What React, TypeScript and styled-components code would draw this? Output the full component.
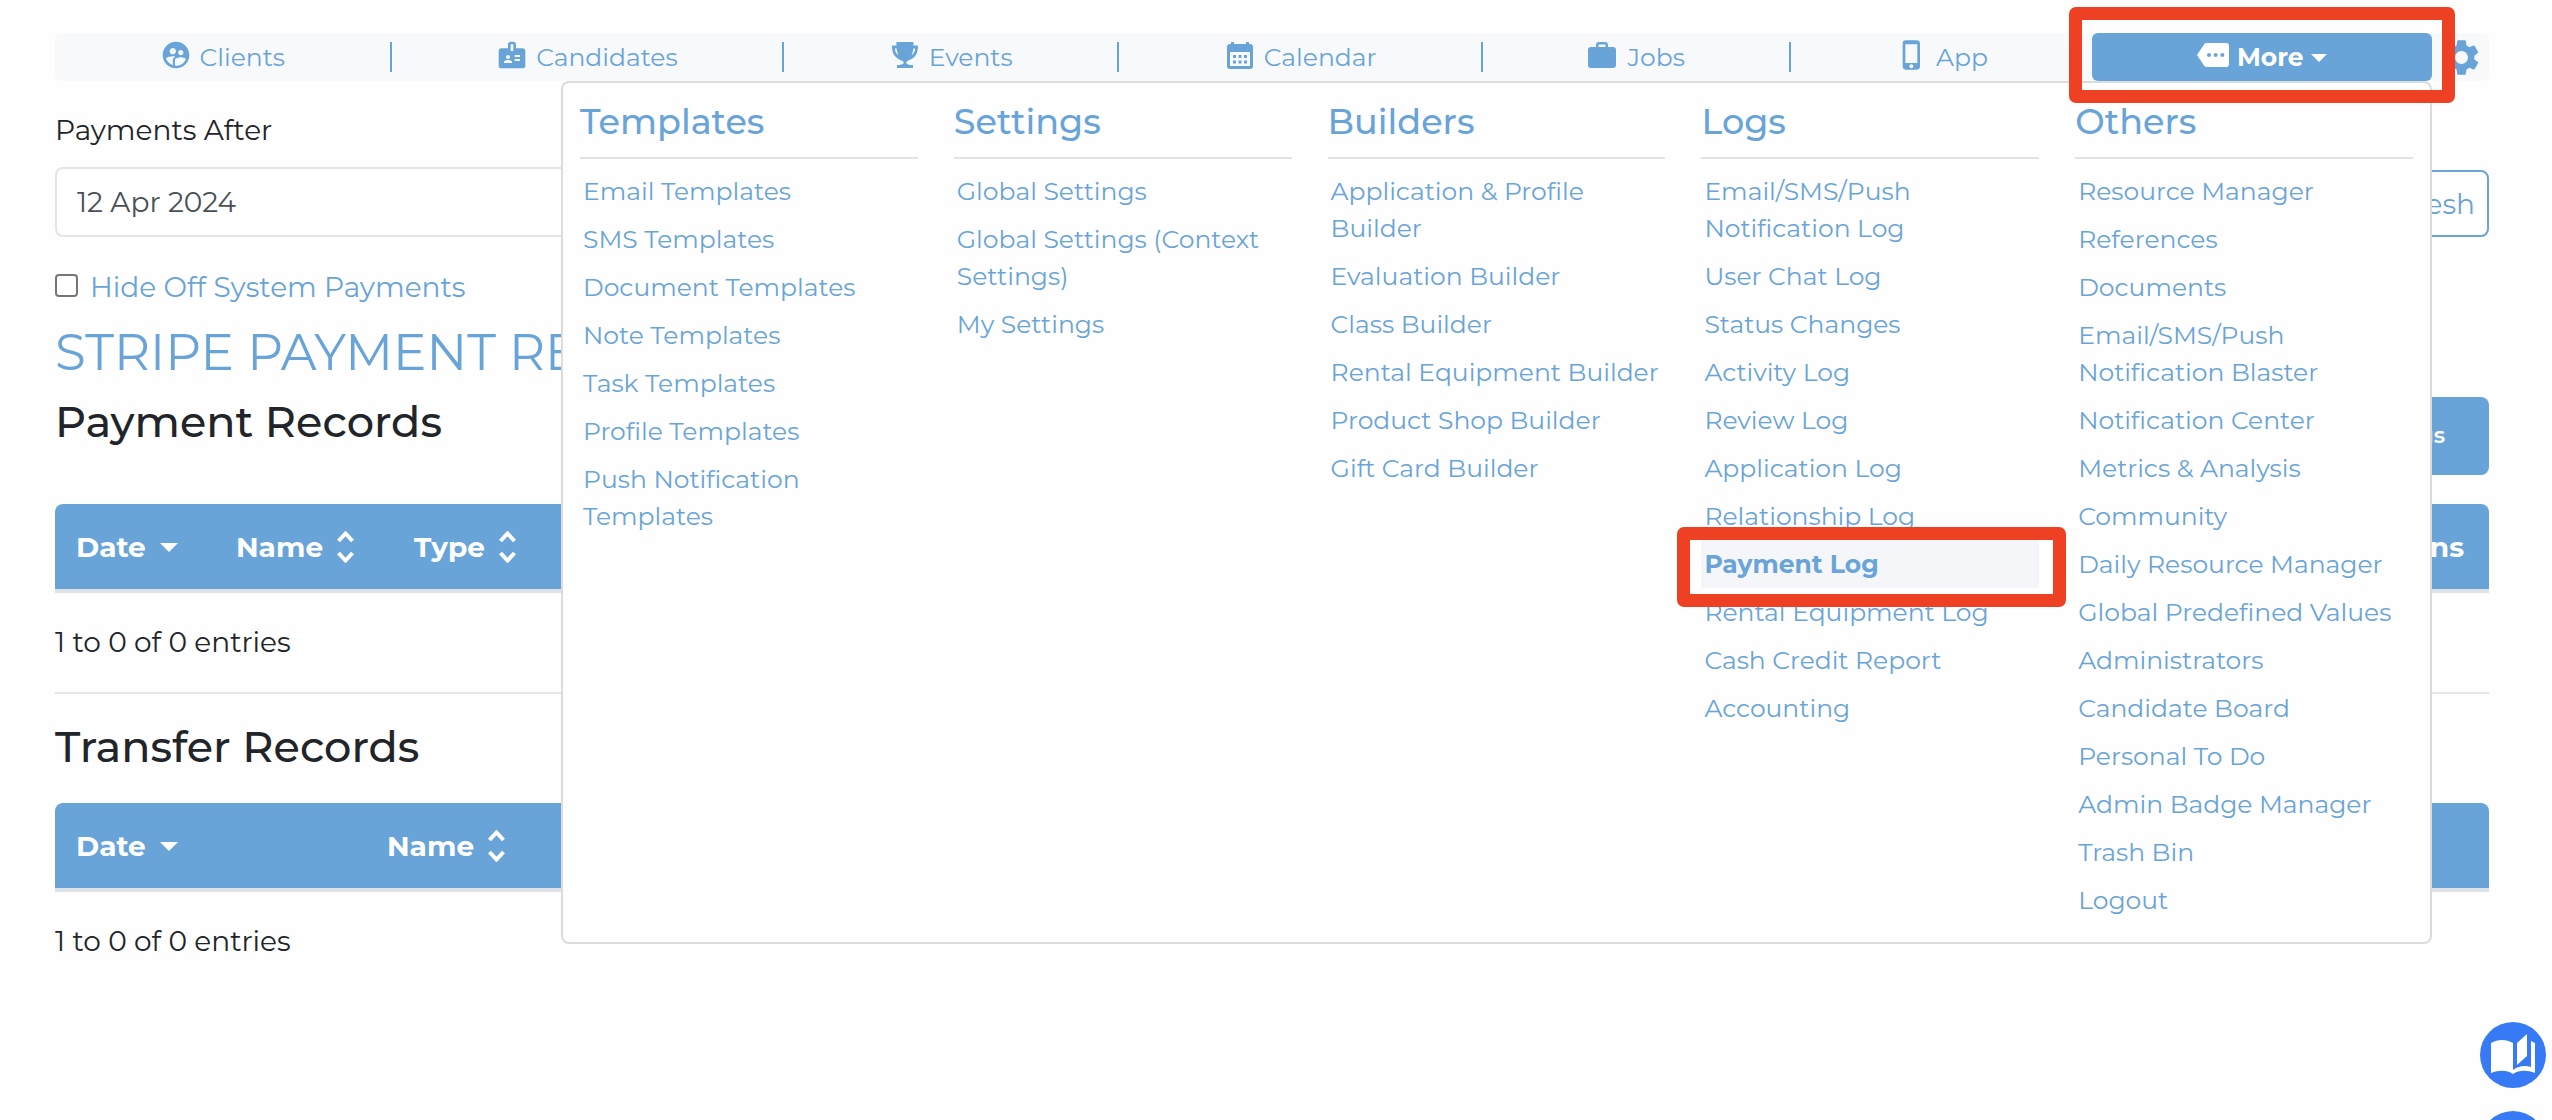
import React from "react";
import styled, { createGlobalStyle } from "styled-components";
import {
  MdSupervisedUserCircle,
  MdBadge,
  MdPhoneIphone,
  MdMore,
  MdSettings,
} from "react-icons/md";
import { IoMdTrophy } from "react-icons/io";

const blue = "#69a4d8";
const ink = "#212529";
const red = "#ee4023";

const GlobalStyle = createGlobalStyle`
  *, *::before, *::after { box-sizing: border-box; }
  body {
    margin: 0;
    background: #fefefe;
    color: ${ink};
    font-family: Montserrat, Inter, "Noto Sans", sans-serif;
    font-size: 28px;
    line-height: 42px;
  }
  button, input { font: inherit; }
  a { color: inherit; text-decoration: none; }
  h1, h2, h3, p, ul { margin: 0; padding: 0; }
`;

const Page = styled.div`
  padding: 33px 63px 40px 55px;
`;

const Nav = styled.nav`
  position: relative;
  display: flex;
  height: 48px;
  border-radius: 6px;
  background: #f8f9fb;
  color: ${blue};
  font-size: 25px;
`;

const NavItem = styled.div`
  flex: 1 1 auto;
  display: flex;
  align-items: center;
  justify-content: center;
  &:not(:nth-last-child(-n + 4)) {
    border-right: 2px solid ${blue};
    border-image: linear-gradient(transparent 10px, ${blue} 10px, ${blue} 38px, transparent 38px) 1;
  }
`;

const NavLink = styled.a`
  display: flex;
  align-items: center;
  gap: 8px;
  svg { flex: none; margin-bottom: 4px; }
`;

const MoreButton = styled.button`
  position: relative;
  flex: 1 1 auto;
  display: flex;
  align-items: center;
  justify-content: center;
  gap: 8px;
  padding: 0;
  border: 0;
  border-radius: 6px;
  background: ${blue};
  color: #fff;
  font-weight: 700;
  svg { flex: none; margin-bottom: 4px; }
`;

const GearButton = styled.button`
  flex: none;
  width: 57px;
  padding: 0 0 0 2px;
  border: 0;
  background: none;
  color: ${blue};
  display: flex;
  align-items: center;
  justify-content: center;
`;

const Highlight = styled.span<{ $inset: string }>`
  position: absolute;
  inset: ${(p) => p.$inset};
  z-index: 3;
  border: 13px solid ${red};
  border-radius: 7px;
  pointer-events: none;
`;

const Caret = styled.span<{ $size?: number }>`
  margin-top: 2px;
  border: ${(p) => p.$size ?? 9}px solid transparent;
  border-top-color: currentColor;
  border-bottom: 0;
`;

const Menu = styled.div`
  position: absolute;
  top: 48px;
  left: 506px;
  right: 57px;
  z-index: 2;
  display: grid;
  grid-template-columns: repeat(5, 1fr);
  gap: 36px;
  padding: 18px 17px 18px;
  border: 2px solid #dcdcdd;
  border-radius: 8px;
  background: #fefefe;
`;

const MenuTitle = styled.h3`
  padding-bottom: 14px;
  margin-bottom: 8px;
  border-bottom: 2px solid #e2e3e4;
  font-size: 35px;
  line-height: 42px;
  font-weight: 500;
`;

const MenuList = styled.ul`
  list-style: none;
`;

const MenuItem = styled.li<{ $active?: boolean }>`
  position: relative;
  padding: 6px 3px 5px;
  line-height: 37px;
  font-size: 25px;
  font-weight: ${(p) => (p.$active ? 700 : 400)};
  background: ${(p) => (p.$active ? "#f5f6f9" : "none")};
`;

const FilterRow = styled.form`
  display: flex;
  align-items: flex-end;
  gap: 24px;
  margin-top: 28px;
`;

const Field = styled.div`
  flex: 1;
  display: flex;
  flex-direction: column;
  gap: 16px;
`;

const DateInput = styled.input`
  height: 70px;
  width: 100%;
  padding: 0 20px;
  border: 2px solid #e3e4e6;
  border-radius: 8px;
  background: #fff;
  color: #495057;
`;

const RefreshButton = styled.button`
  height: 67px;
  padding: 0 12px;
  border: 2px solid ${blue};
  border-radius: 8px;
  background: #fff;
  color: ${blue};
`;

const CheckRow = styled.label`
  display: flex;
  align-items: center;
  gap: 12px;
  margin-top: 29px;
  color: ${blue};
`;

const CheckBox = styled.input`
  appearance: none;
  width: 23px;
  height: 23px;
  margin: 0 0 4px;
  border: 2px solid #767676;
  border-radius: 4px;
  background: #fff;
`;

const PageTitle = styled.h1`
  margin-top: 15px;
  color: ${blue};
  font-size: 50px;
  line-height: 60px;
  font-weight: 400;
`;

const SectionHead = styled.div`
  display: flex;
  justify-content: space-between;
  align-items: flex-start;
`;

const SectionTitle = styled.h2`
  margin: 13px 0 30px;
  font-size: 43px;
  line-height: 52px;
  font-weight: 500;
`;

const LogsButton = styled.button`
  height: 78px;
  margin: 14px 0 29px;
  padding: 0 44px;
  border: 0;
  border-radius: 8px;
  background: ${blue};
  color: #fff;
  font-size: 22px;
  font-weight: 600;
`;

const Table = styled.table`
  width: 100%;
  table-layout: fixed;
  border-collapse: separate;
  border-spacing: 0;
  color: #fff;
`;

const HeadCell = styled.th<{ $width?: number; $right?: boolean }>`
  width: ${(p) => (p.$width ? `${p.$width}px` : "auto")};
  height: 89px;
  padding: 0 25px 0 21px;
  border-bottom: 4px solid #dee2e6;
  background: ${blue};
  font-weight: 700;
  text-align: ${(p) => (p.$right ? "right" : "left")};
  &:first-child { border-top-left-radius: 8px; }
  &:last-child { border-top-right-radius: 8px; }
`;

const SortLabel = styled.span`
  display: flex;
  align-items: center;
  gap: 14px;
`;

const Entries = styled.p`
  margin-top: 28px;
`;

const Divider = styled.hr`
  margin: 29px 0 27px;
  border: 0;
  border-top: 2px solid #e3e4e6;
`;

const HelpStack = styled.aside`
  position: fixed;
  right: 6px;
  bottom: -57px;
  display: flex;
  flex-direction: column;
  gap: 23px;
`;

const HelpButton = styled.button`
  width: 66px;
  height: 66px;
  padding: 0;
  border: 0;
  border-radius: 50%;
  background: #367af6;
`;

const CalendarIcon = () => (
  <svg width="32" height="27" viewBox="-3 0 32 27" aria-hidden="true">
    <path fill="currentColor" fillRule="evenodd" d="M4 0h3v2h12V0h3v2h1a3 3 0 0 1 3 3v19a3 3 0 0 1-3 3H3a3 3 0 0 1-3-3V5a3 3 0 0 1 3-3h1zM3 10v14h20V10z" />
    <path fill="currentColor" d="M6 13h3v3H6zM11.500 13h3v3h-3zM17 13h3v3h-3zM6 18.500h3v3H6zM11.500 18.500h3v3h-3zM17 18.500h3v3h-3z" />
  </svg>
);

const BriefcaseIcon = () => (
  <svg width="32" height="26" viewBox="0 0 32 26" aria-hidden="true">
    <path fill="currentColor" fillRule="evenodd" d="M8 5V3a3 3 0 0 1 3-3h6a3 3 0 0 1 3 3v2h5a3 3 0 0 1 3 3v15a3 3 0 0 1-3 3H3a3 3 0 0 1-3-3V8a3 3 0 0 1 3-3zm2.500 0h7V2.500h-7z" />
  </svg>
);

const SortIcon = () => (
  <svg width="17" height="32" viewBox="0 0 17 32" fill="none" stroke="currentColor" strokeWidth="4" aria-hidden="true">
    <path d="M1.500 10l7-7.500 7 7.500M1.500 22l7 7.500 7-7.500" />
  </svg>
);

const BookIcon = () => (
  <svg width="66" height="66" viewBox="0 0 66 66" aria-hidden="true">
    <path fill="#fff" d="M11 21c7-4 15-4 22 0v27c5-4 12-5 18-3V19l4 2v30c-8-3-16-3-22 1-6-4-14-4-22-1z" />
    <path fill="#fff" d="M37 21l10-9v22l-10 9z" />
  </svg>
);

const navItems = [
  { label: "Clients", icon: <MdSupervisedUserCircle size={32} /> },
  { label: "Candidates", icon: <MdBadge size={32} /> },
  { label: "Events", icon: <IoMdTrophy size={32} /> },
  { label: "Calendar", icon: <CalendarIcon /> },
  { label: "Jobs", icon: <BriefcaseIcon /> },
  { label: "App", icon: <MdPhoneIphone size={32} /> },
];

const menuColumns = [
  {
    title: "Templates",
    items: ["Email Templates", "SMS Templates", "Document Templates", "Note Templates", "Task Templates", "Profile Templates", "Push Notification Templates"],
  },
  {
    title: "Settings",
    items: ["Global Settings", "Global Settings (Context Settings)", "My Settings"],
  },
  {
    title: "Builders",
    items: ["Application & Profile Builder", "Evaluation Builder", "Class Builder", "Rental Equipment Builder", "Product Shop Builder", "Gift Card Builder"],
  },
  {
    title: "Logs",
    items: ["Email/SMS/Push Notification Log", "User Chat Log", "Status Changes", "Activity Log", "Review Log", "Application Log", "Relationship Log", "Payment Log", "Rental Equipment Log", "Cash Credit Report", "Accounting"],
  },
  {
    title: "Others",
    items: ["Resource Manager", "References", "Documents", "Email/SMS/Push Notification Blaster", "Notification Center", "Metrics & Analysis", "Community", "Daily Resource Manager", "Global Predefined Values", "Administrators", "Candidate Board", "Personal To Do", "Admin Badge Manager", "Trash Bin", "Logout"],
  },
];

const activeItem = "Payment Log";

export default function App() {
  return (
    <>
      <GlobalStyle />
      <Page>
        <Nav>
          {navItems.map((item) => (
            <NavItem key={item.label}>
              <NavLink href="#">
                {item.icon}
                {item.label}
              </NavLink>
            </NavItem>
          ))}
          <MoreButton type="button">
            <MdMore size={32} />
            More
            <Caret $size={8} />
            <Highlight $inset="-26px -23px -22px" />
          </MoreButton>
          <GearButton type="button" aria-label="Preferences">
            <MdSettings size={43} />
          </GearButton>
          <Menu>
            {menuColumns.map((column) => (
              <section key={column.title}>
                <MenuTitle>{column.title}</MenuTitle>
                <MenuList>
                  {column.items.map((item) => (
                    <MenuItem key={item} $active={item === activeItem}>
                      <a href="#">{item}</a>
                      {item === activeItem && <Highlight $inset="-13px -27px -19px -24px" />}
                    </MenuItem>
                  ))}
                </MenuList>
              </section>
            ))}
          </Menu>
        </Nav>

        <FilterRow>
          <Field>
            <label htmlFor="after">Payments After</label>
            <DateInput id="after" defaultValue="12 Apr 2024" />
          </Field>
          <RefreshButton type="button">Refresh</RefreshButton>
        </FilterRow>
        <CheckRow>
          <CheckBox type="checkbox" />
          Hide Off System Payments
        </CheckRow>

        <PageTitle>STRIPE PAYMENT RECORDS</PageTitle>
        <SectionHead>
          <SectionTitle>Payment Records</SectionTitle>
          <LogsButton type="button">Logs</LogsButton>
        </SectionHead>
        <Table>
          <thead>
            <tr>
              <HeadCell $width={160}><SortLabel>Date <Caret /></SortLabel></HeadCell>
              <HeadCell $width={178}><SortLabel>Name <SortIcon /></SortLabel></HeadCell>
              <HeadCell $width={177}><SortLabel>Type <SortIcon /></SortLabel></HeadCell>
              <HeadCell $right>Actions</HeadCell>
            </tr>
          </thead>
        </Table>
        <Entries>1 to 0 of 0 entries</Entries>
        <Divider />
        <SectionTitle>Transfer Records</SectionTitle>
        <Table>
          <thead>
            <tr>
              <HeadCell $width={311}><SortLabel>Date <Caret /></SortLabel></HeadCell>
              <HeadCell><SortLabel>Name <SortIcon /></SortLabel></HeadCell>
            </tr>
          </thead>
        </Table>
        <Entries>1 to 0 of 0 entries</Entries>
      </Page>
      <HelpStack>
        <HelpButton type="button" aria-label="Guide"><BookIcon /></HelpButton>
        <HelpButton type="button" aria-label="Help" />
      </HelpStack>
    </>
  );
}
